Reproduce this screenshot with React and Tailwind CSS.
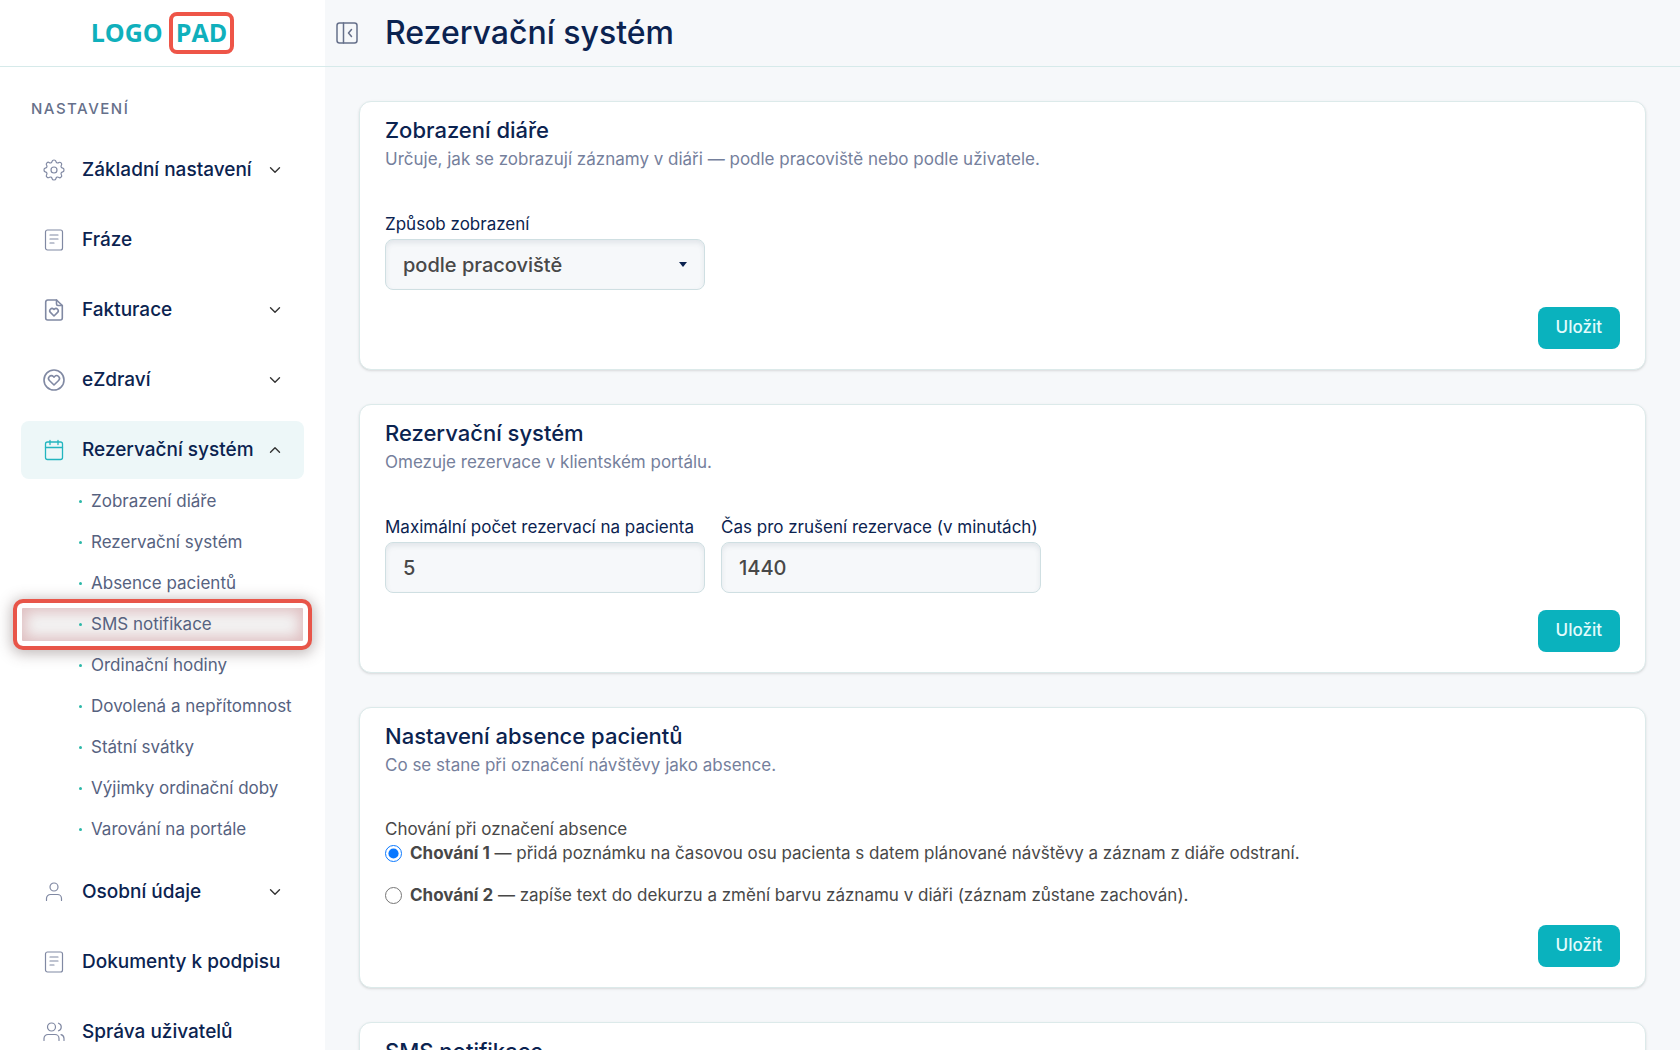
import { useState } from "react";
import clsx from "clsx";

const iconProps = {
  viewBox: "0 0 24 24",
  fill: "none",
  stroke: "currentColor",
  strokeWidth: 1.2,
  strokeLinecap: "round",
  strokeLinejoin: "round",
  "aria-hidden": true,
};

const GearIcon = () => (
  <svg {...iconProps} className="size-6">
    <circle cx="12" cy="12" r="3" />
    <path d="M10.2 3.2c.3-1.6 3.3-1.6 3.6 0 .3 1.7 1.8 2.3 3.2 1.3 1.3-.9 3.4 1.2 2.5 2.5-1 1.4-.4 2.9 1.3 3.2 1.6.3 1.6 3.3 0 3.6-1.7.3-2.3 1.8-1.3 3.2.9 1.3-1.2 3.4-2.5 2.5-1.4-1-2.9-.4-3.2 1.3-.3 1.6-3.3 1.6-3.6 0-.3-1.7-1.8-2.3-3.2-1.3-1.3.9-3.4-1.2-2.5-2.5 1-1.4.4-2.9-1.3-3.2-1.6-.3-1.6-3.3 0-3.6 1.7-.3 2.3-1.8 1.3-3.2-.9-1.3 1.2-3.4 2.5-2.5 1.4 1 2.9.4 3.2-1.3Z" />
  </svg>
);

const NoteIcon = () => (
  <svg {...iconProps} className="size-6">
    <rect x="3.5" y="2" width="17" height="20" rx="2" />
    <path d="M8 7h8M8 11h8M8 15h4" />
  </svg>
);

const InvoiceIcon = () => (
  <svg {...iconProps} strokeWidth={1.6} className="size-6">
    <path d="M14.5 2H5.7a2 2 0 0 0-2 2v16a2 2 0 0 0 2 2h12.6a2 2 0 0 0 2-2V7.5Z" />
    <path d="M14.5 2v4a1.5 1.5 0 0 0 1.5 1.5h4.3" />
    <path d="m12 18-3.6-3.6a2.3 2.3 0 0 1 3.2-3.3l.4.4.4-.4a2.3 2.3 0 0 1 3.2 3.3Z" />
  </svg>
);

const HealthIcon = () => (
  <svg {...iconProps} strokeWidth={1.6} className="size-6">
    <circle cx="12" cy="12" r="10" />
    <path d="m12 17-4.6-4.5a2.8 2.8 0 0 1 4-4l.6.6.6-.6a2.8 2.8 0 0 1 4 4Z" />
  </svg>
);

const CalendarIcon = () => (
  <svg {...iconProps} strokeWidth={1.3} className="size-6">
    <rect x="3.5" y="4" width="17" height="17.5" rx="2" />
    <path d="M3.5 9.5h17M8 2.5v4M16 2.5v4" />
  </svg>
);

const UserIcon = () => (
  <svg {...iconProps} className="size-6">
    <circle cx="12" cy="7" r="4" />
    <path d="M4.5 20.5v-2a4 4 0 0 1 4-4h7a4 4 0 0 1 4 4v2" />
  </svg>
);

const UsersIcon = () => (
  <svg {...iconProps} className="size-6">
    <circle cx="9.5" cy="7" r="4" />
    <path d="M2 20.5v-2a4 4 0 0 1 4-4h7a4 4 0 0 1 4 4v2M16.5 3.2a4 4 0 0 1 0 7.6M19 14.7a4 4 0 0 1 3 3.8v2" />
  </svg>
);

const PanelIcon = () => (
  <svg {...iconProps} strokeWidth={1.5} className="size-6">
    <rect x="2" y="2" width="20" height="20" rx="2.5" />
    <path d="M8.5 2v20M16.5 8.5l-3 3.5 3 3.5" />
  </svg>
);

const Chevron = ({ up }) => (
  <svg {...iconProps} strokeWidth={1.4} className={clsx("size-3 shrink-0 text-[#333]", up && "rotate-180")} viewBox="0 0 12 12">
    <path d="m1.5 3.7 4.5 4.5 4.5-4.5" />
  </svg>
);

const menu = [
  { label: "Základní nastavení", icon: GearIcon, expandable: true },
  { label: "Fráze", icon: NoteIcon },
  { label: "Fakturace", icon: InvoiceIcon, expandable: true },
  { label: "eZdraví", icon: HealthIcon, expandable: true },
  {
    label: "Rezervační systém",
    icon: CalendarIcon,
    expandable: true,
    children: [
      "Zobrazení diáře",
      "Rezervační systém",
      "Absence pacientů",
      "SMS notifikace",
      "Ordinační hodiny",
      "Dovolená a nepřítomnost",
      "Státní svátky",
      "Výjimky ordinační doby",
      "Varování na portále",
    ],
  },
  { label: "Osobní údaje", icon: UserIcon, expandable: true },
  { label: "Dokumenty k podpisu", icon: NoteIcon },
  { label: "Správa uživatelů", icon: UsersIcon },
];

const highlighted = "SMS notifikace";

const SubMenu = ({ items }) => (
  <ul className="pt-0.5 pb-px">
    {items.map((item) => (
      <li key={item} className="relative">
        {item === highlighted && (
          <span className="absolute -inset-x-2 -inset-y-[5px] rounded-[10px] border-4 border-[#e85549] bg-[#f3f3f3] shadow-[0_2px_14px_2px_rgba(80,60,60,0.35),inset_0_0_0_5px_#fff,inset_0_0_14px_9px_#dfbfc1]" />
        )}
        <a href="#" className="relative flex h-[41px] items-center gap-[9px] pl-[58px] text-[17px] whitespace-nowrap text-[#56627f]">
          <span className="size-[3px] shrink-0 rounded-full bg-[#2bb8a8]" />
          {item}
        </a>
      </li>
    ))}
  </ul>
);

const MenuItem = ({ item }) => {
  const Icon = item.icon;
  const open = Boolean(item.children);
  const Tag = item.expandable ? "button" : "a";
  const linkProps = item.expandable ? { type: "button", "aria-expanded": open } : { href: "#" };

  return (
    <li>
      <Tag
        {...linkProps}
        className={clsx(
          "flex h-[58px] w-full items-center rounded-lg pr-[23px] pl-[21px] text-left text-[19px] font-medium whitespace-nowrap text-[#0b2350]",
          open && "bg-[#edf7f8]"
        )}
      >
        <span className={clsx("mr-4 shrink-0", open ? "text-[#22b5bf]" : "text-[#8089a3]")}>
          <Icon />
        </span>
        <span className="flex-1">{item.label}</span>
        {item.expandable && <Chevron up={open} />}
      </Tag>
      {open && <SubMenu items={item.children} />}
    </li>
  );
};

const Card = ({ title, description, children }) => (
  <section className="rounded-xl border border-[#dceaea] bg-white px-[25px] pt-3.5 pb-5 shadow-sm">
    <h2 className="text-[22px] leading-7 font-medium text-[#0b2350]">{title}</h2>
    {description && <p className="mt-px text-[17px] leading-7 text-[#75809c]">{description}</p>}
    {children && (
      <>
        <div className="mt-[39px]">{children}</div>
        <div className="mt-[17px] flex justify-end">
          <button type="submit" className="h-[42px] rounded-lg bg-[#0ab2be] px-[18px] text-[17px] font-medium text-[#e3fbfc]">
            Uložit
          </button>
        </div>
      </>
    )}
  </section>
);

const fieldClass =
  "h-[51px] w-full appearance-none rounded-lg border border-[#cfdfe2] bg-[#f6f8fa] px-[17px] text-[20px] font-medium text-[#484848] shadow-[inset_0_3px_5px_rgba(60,80,100,0.1)]";

const Field = ({ id, label, children }) => (
  <div className="w-80">
    <label htmlFor={id} className="block h-[27px] text-[17px] leading-6 whitespace-nowrap text-[#0b2350]">
      {label}
    </label>
    {children}
  </div>
);

const absenceOptions = [
  { id: "1", name: "Chování 1", text: "přidá poznámku na časovou osu pacienta s datem plánované návštěvy a záznam z diáře odstraní." },
  { id: "2", name: "Chování 2", text: "zapíše text do dekurzu a změní barvu záznamu v diáři (záznam zůstane zachován)." },
];

const App = () => {
  const [absence, setAbsence] = useState("1");

  return (
    <div className="flex h-screen flex-col overflow-hidden bg-[#f6f8fa] font-['Inter','Liberation_Sans',sans-serif]">
      <header className="flex h-[67px] shrink-0 border-b border-[#d6eaea]">
        <div className="flex w-[325px] shrink-0 items-center justify-center gap-1.5 bg-white font-['Open_Sans',sans-serif] text-[25px] font-bold text-[#10b0bc]">
          <span>LOGO</span>
          <span className="flex h-[42px] items-center rounded-lg border-4 border-[#ee5548] px-[3px]">PAD</span>
        </div>
        <div className="flex items-center pl-2.5">
          <button type="button" aria-label="Skrýt menu" className="text-[#66708a]">
            <PanelIcon />
          </button>
          <h1 className="pl-[26px] text-[32px] font-medium text-[#0b2350]">Rezervační systém</h1>
        </div>
      </header>

      <div className="flex min-h-0 flex-1">
        <nav className="w-[325px] shrink-0 overflow-hidden bg-white px-[21px] pt-8">
          <p className="pl-2.5 text-[15px] leading-5 font-medium tracking-widest text-[#66708a]">NASTAVENÍ</p>
          <ul className="mt-[22px] flex flex-col gap-3">
            {menu.map((item) => (
              <MenuItem key={item.label} item={item} />
            ))}
          </ul>
        </nav>

        <main className="flex-1 space-y-[34px] overflow-y-auto px-[34px] pt-[34px] [scrollbar-width:none]">
          <Card title="Zobrazení diáře" description="Určuje, jak se zobrazují záznamy v diáři — podle pracoviště nebo podle uživatele.">
            <Field id="view" label="Způsob zobrazení">
              <div className="relative">
                <select id="view" className={fieldClass}>
                  <option>podle pracoviště</option>
                  <option>podle uživatele</option>
                </select>
                <svg viewBox="0 0 8 5" className="pointer-events-none absolute top-[23px] right-[18px] h-[5px] w-2 text-[#0b2350]" aria-hidden="true">
                  <path d="M0 0h8L4 5Z" fill="currentColor" />
                </svg>
              </div>
            </Field>
          </Card>

          <Card title="Rezervační systém" description="Omezuje rezervace v klientském portálu.">
            <div className="flex gap-4">
              <Field id="max" label="Maximální počet rezervací na pacienta">
                <input id="max" type="text" defaultValue="5" className={fieldClass} />
              </Field>
              <Field id="cancel" label="Čas pro zrušení rezervace (v minutách)">
                <input id="cancel" type="text" defaultValue="1440" className={fieldClass} />
              </Field>
            </div>
          </Card>

          <Card title="Nastavení absence pacientů" description="Co se stane při označení návštěvy jako absence.">
            <fieldset className="text-[17px] text-[#484848]">
              <legend className="leading-[22px]">Chování při označení absence</legend>
              <div className="space-y-4">
                {absenceOptions.map((option) => (
                  <label key={option.id} className="flex items-center gap-2 leading-[26px]">
                    <input
                      type="radio"
                      name="absence"
                      value={option.id}
                      checked={absence === option.id}
                      onChange={() => setAbsence(option.id)}
                      className="size-[17px] accent-[#0a78ff]"
                    />
                    <span>
                      <strong className="font-bold">{option.name}</strong> — {option.text}
                    </span>
                  </label>
                ))}
              </div>
            </fieldset>
          </Card>

          <Card title="SMS notifikace" />
        </main>
      </div>
    </div>
  );
};

export default App;
